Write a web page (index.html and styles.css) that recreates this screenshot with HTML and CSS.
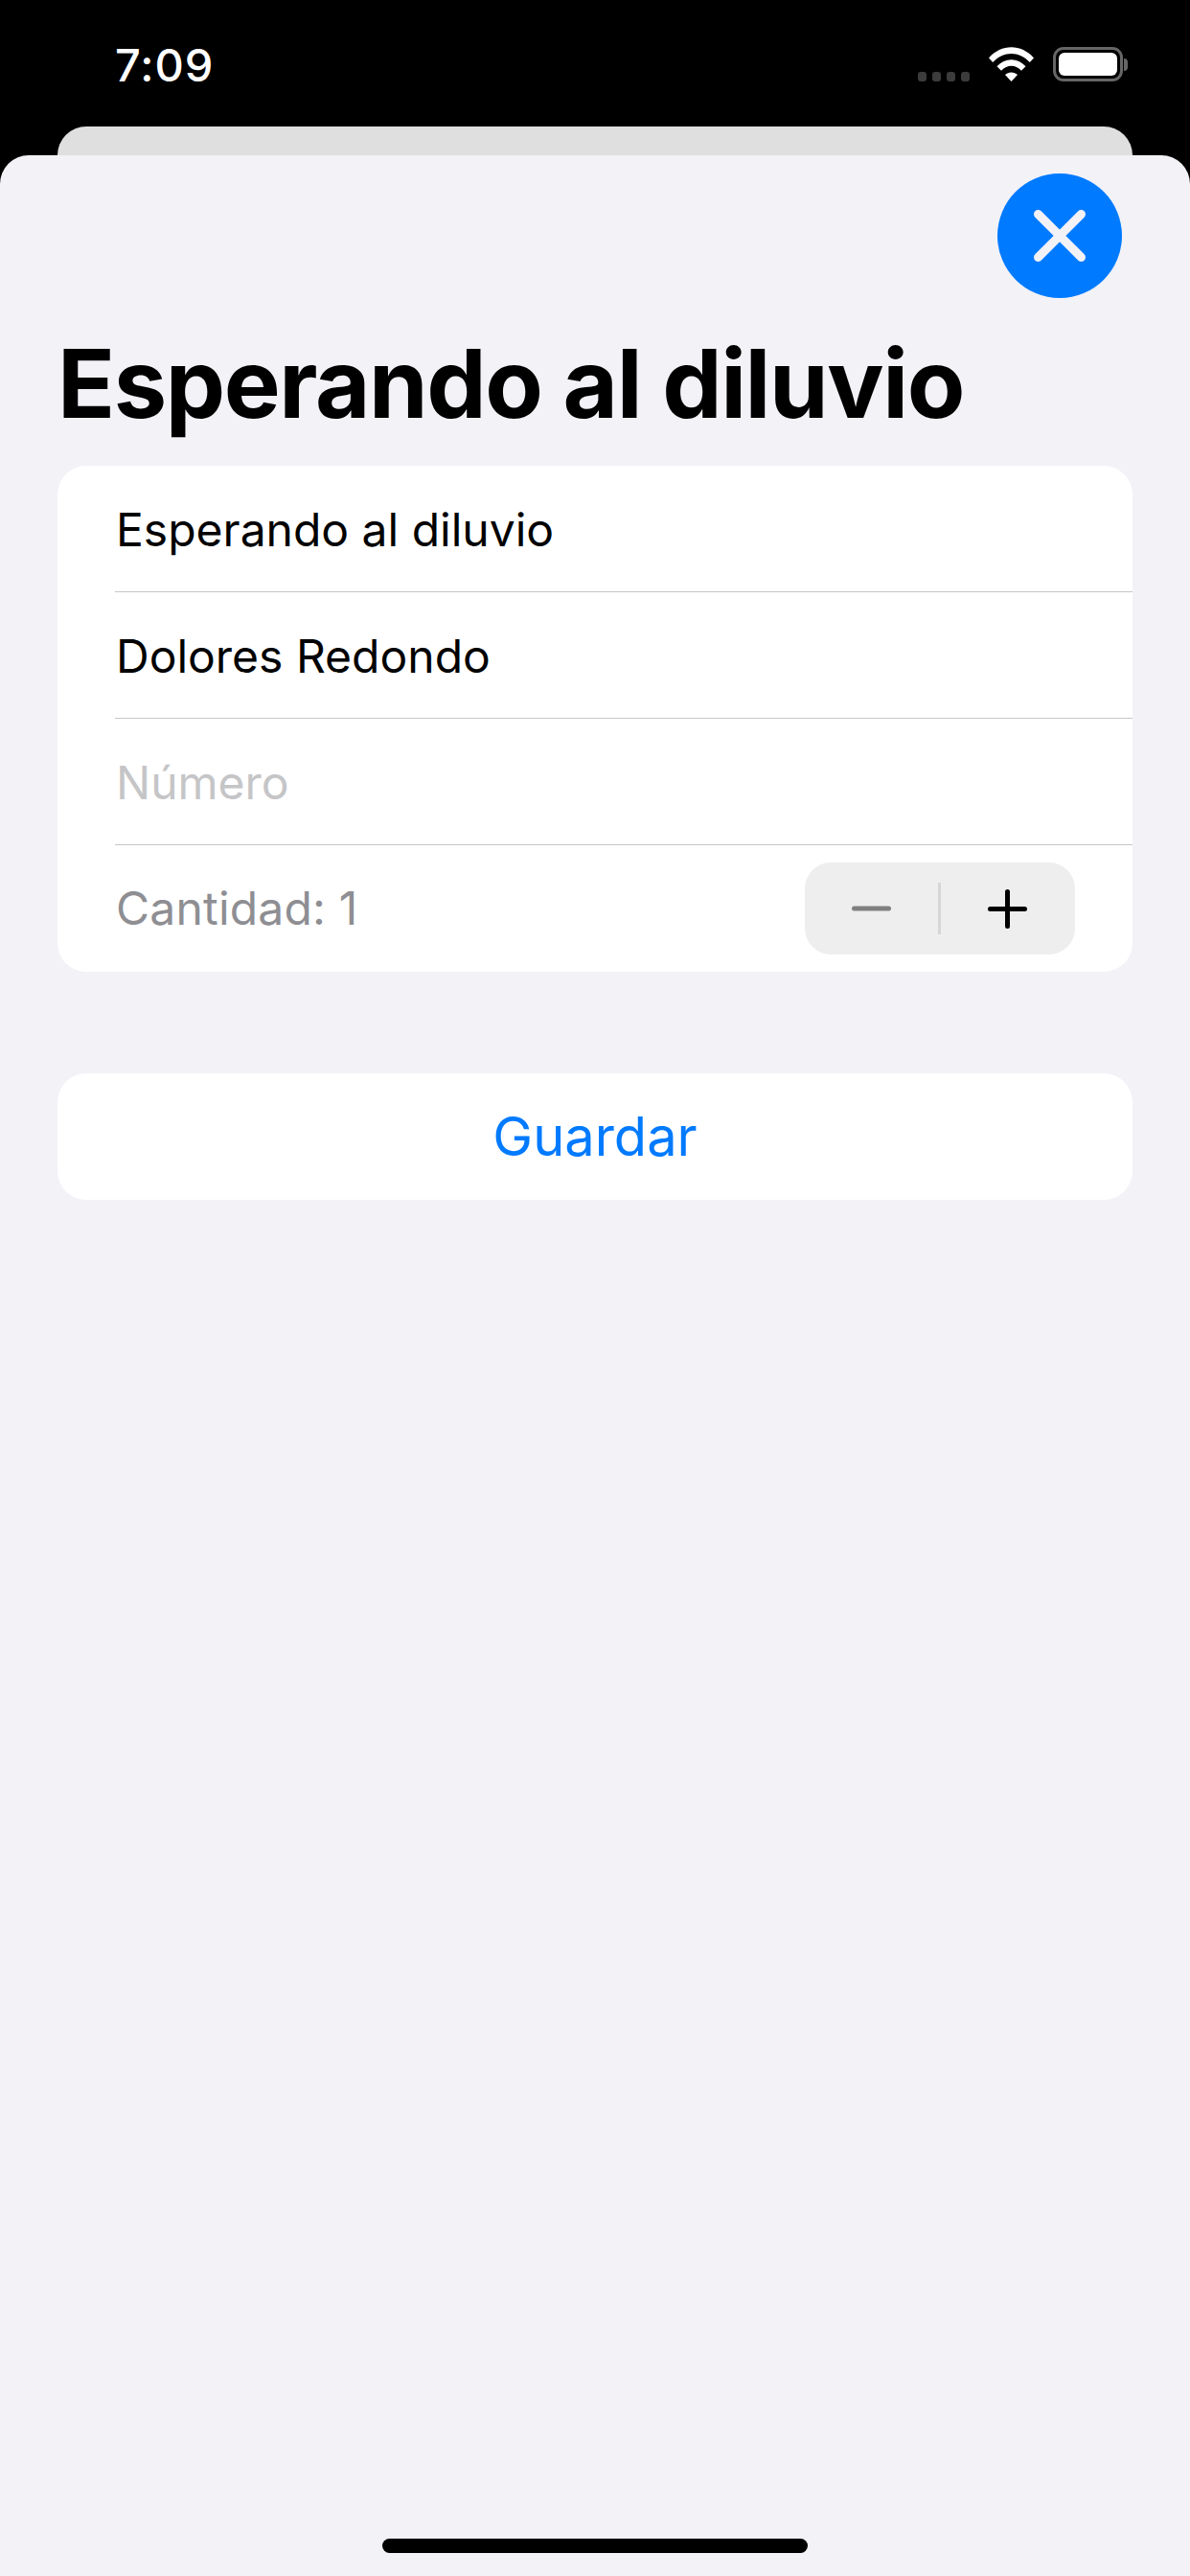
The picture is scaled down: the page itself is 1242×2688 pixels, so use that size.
FILE: index.html
```html
<!DOCTYPE html>
<html lang="es">
<head>
<meta charset="utf-8">
<title>Esperando al diluvio</title>
<link rel="stylesheet" href="styles.css">
</head>
<body>
<div class="screen">
  <header class="status">
    <span class="time">7:09</span>
    <div class="status-icons">
      <div class="signal"><i></i><i></i><i></i><i></i></div>
      <svg class="wifi" viewBox="0 0 47 36" aria-hidden="true">
        <path d="M0 11.5 C13 -3.5 34 -3.5 47 11.5 L42.8 16 C31.5 4 15.500 4 4.200 16 Z" fill="#fff"/>
        <path d="M8.500 20.200 C17 11 30 11 38.500 20.200 L34 24.800 C27.500 18 19.500 18 13 24.800 Z" fill="#fff"/>
        <path d="M17 29 C20.500 25.500 26.500 25.500 30 29 L23.500 36 Z" fill="#fff"/>
      </svg>
      <div class="battery"><div class="battery-body"><div class="battery-fill"></div></div><div class="battery-nub"></div></div>
    </div>
  </header>
  <div class="back-card"></div>
  <main class="sheet">
    <button class="close" aria-label="Cerrar">
      <svg viewBox="0 0 54 54" aria-hidden="true"><path d="M4.500 4.500 L49.500 49.500 M49.500 4.500 L4.500 49.500" stroke="#f2f2f7" stroke-width="9" stroke-linecap="round" fill="none"/></svg>
    </button>
    <h1 class="title">Esperando al diluvio</h1>
    <section class="card">
      <div class="row"><span class="value">Esperando al diluvio</span></div>
      <div class="row"><span class="value">Dolores Redondo</span></div>
      <div class="row"><span class="placeholder">Número</span></div>
      <div class="row row-last">
        <span class="muted">Cantidad: 1</span>
        <div class="stepper">
          <svg class="step" viewBox="0 0 41 41" aria-hidden="true"><path d="M2.500 20 H38.500" stroke="#808080" stroke-width="5" stroke-linecap="round"/></svg>
          <span class="step-divider"></span>
          <svg class="step" viewBox="0 0 41 41" aria-hidden="true"><path d="M2.500 20.500 H38.500 M20.500 2.500 V38.500" stroke="#000" stroke-width="5" stroke-linecap="round"/></svg>
        </div>
      </div>
    </section>
    <button class="save">Guardar</button>
    <div class="home"></div>
  </main>
</div>
</body>
</html>
```

FILE: styles.css
```css
* { box-sizing: border-box; }
html, body { margin: 0; padding: 0; background: #000; }
body { font-family: Inter, "Noto Sans", sans-serif; }
.screen { width: 1242px; height: 2688px; display: flex; flex-direction: column; overflow: hidden; background: #000; }

.status { height: 132px; display: flex; align-items: flex-start; justify-content: space-between; padding: 40px 65px 0 120px; flex: none; }
.time { color: #fff; font-size: 47px; line-height: 56px; font-weight: 500; letter-spacing: 1px; }
.status-icons { display: flex; align-items: flex-start; margin-top: 9px; }
.signal { display: flex; gap: 6px; margin-top: 26px; margin-right: 20px; }
.signal i { width: 9px; height: 10px; border-radius: 3px; background: #3c3c3c; display: block; }
.wifi { width: 47px; height: 36px; display: block; margin-right: 20px; }
.battery { display: flex; align-items: center; height: 36px; }
.battery-body { width: 73px; height: 36px; border: 3px solid #666; border-radius: 11px; padding: 3px; }
.battery-fill { width: 100%; height: 100%; background: #fff; border-radius: 6px; }
.battery-nub { width: 4px; height: 13px; background: #666; border-radius: 0 4px 4px 0; margin-left: 1px; }

.back-card { height: 30px; margin: 0 60px; background: #dfdfdf; border-radius: 30px 30px 0 0; flex: none; }
.sheet { flex: 1; background: #f2f2f7; border-radius: 30px 30px 0 0; padding: 19px 60px 24px; display: flex; flex-direction: column; position: relative; }

.close { width: 130px; height: 130px; border-radius: 50%; border: 0; padding: 0; background: #007aff; align-self: flex-end; margin-right: 11px; display: flex; align-items: center; justify-content: center; flex: none; }
.close svg { width: 54px; height: 54px; display: block; }

.title { margin: 36px 0 0 0; height: 139px; font-size: 99px; line-height: 106px; font-weight: 700; color: #000; letter-spacing: -1.4px; flex: none; }

.card { background: #fff; border-radius: 30px; flex: none; overflow: hidden; }
.row { height: 132px; margin-left: 60px; border-bottom: 1px solid #c6c6c8; display: flex; align-items: center; justify-content: space-between; padding-right: 60px; font-size: 48px; line-height: 60px; }
.row-last { border-bottom: 0; }
.value, .placeholder { padding-top: 3px; padding-left: 1px; }
.muted { padding-left: 1px; letter-spacing: 0.2px; }
.value { color: #000; }
.placeholder { color: #c5c5c7; }
.muted { color: #8e8e93; }

.stepper { width: 282px; height: 96px; border-radius: 27px; background: #eeeeef; display: flex; align-items: center; flex: none; }
.step { width: 41px; height: 41px; margin: 0 49px; display: block; flex: none; }
.step-divider { width: 3px; height: 54px; background: #d6d6d8; flex: none; }

.save { margin-top: 106px; height: 132px; border: 0; border-radius: 30px; background: #fff; color: #007aff; font-family: inherit; font-size: 56px; flex: none; padding: 0; }

.home { position: absolute; left: 399px; bottom: 24px; width: 444px; height: 15px; border-radius: 8px; background: #000; }
```
